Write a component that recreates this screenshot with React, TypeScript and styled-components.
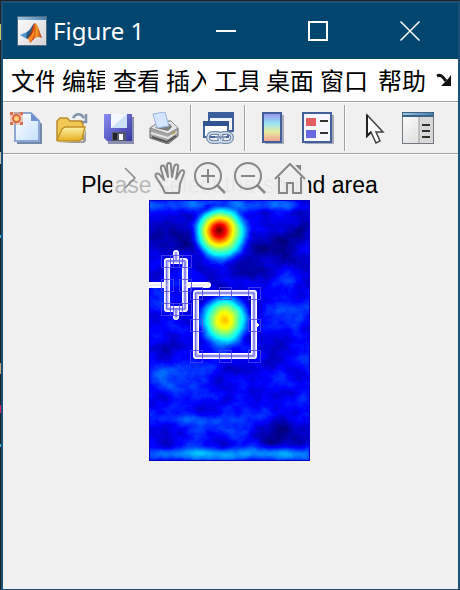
import React from "react";
import styled, { createGlobalStyle } from "styled-components";

const GlobalStyle = createGlobalStyle`
  *, *::before, *::after { box-sizing: border-box; }
  body { margin: 0; background: #222222; }
  button { appearance: none; border: 0; padding: 0; margin: 0; background: none; font: inherit; color: inherit; }
  svg { display: block; }
`;

const Desktop = styled.div`
  min-height: 100vh;
  display: flex;
  padding: 1px 0 0 1px;
  background:
    linear-gradient(#c8c4b4, #c8c4b4) 0 152px / 1px 12px no-repeat,
    linear-gradient(#c9c76a, #c9c76a) 0 24px / 1px 16px no-repeat,
    linear-gradient(#46b4cc, #46b4cc) 0 235px / 1px 3px no-repeat,
    linear-gradient(#c9a878, #c9a878) 0 363px / 1px 11px no-repeat,
    linear-gradient(#d81b60, #d81b60) 0 405px / 1px 8px no-repeat,
    linear-gradient(#46b4cc, #46b4cc) 0 444px / 1px 3px no-repeat,
    #222222;
`;

const Window = styled.section`
  flex: 1;
  min-width: 0;
  display: flex;
  flex-direction: column;
  border: 2px solid #1b5078;
  border-bottom-width: 1px;
  background: #f0f0f0;
`;

const TitleBar = styled.header`
  display: flex;
  align-items: center;
  height: 56px;
  padding: 0 2px 0 14px;
  background: #024670;
  color: #ffffff;
`;

const WindowTitle = styled.h1`
  flex: 1;
  margin: 0 0 0 6px;
  font: 400 24px/32px "Noto Sans", "Open Sans", sans-serif;
  white-space: nowrap;
`;

const CaptionButton = styled.button`
  display: grid;
  place-items: center;
  width: 92px;
  height: 54px;
`;

const MenuBar = styled.nav`
  display: flex;
  align-items: center;
  gap: 8px;
  height: 42px;
  padding-left: 8px;
  background: #ffffff;
  font: 400 24px/36px "Noto Sans CJK SC", sans-serif;
  color: #000000;
`;

const MenuItem = styled.button<{ $width: number }>`
  flex: none;
  width: ${(p) => p.$width}px;
  overflow: hidden;
  text-align: left;
  white-space: nowrap;
`;

const ToolBar = styled.div`
  display: flex;
  align-items: center;
  height: 53px;
  border-top: 1px solid #a0a0a0;
  border-bottom: 1px solid #a0a0a0;
  box-shadow: inset 0 1px #ffffff, 0 1px #ffffff;
  background: #f0f0f0;
`;

const ToolGroup = styled.div`
  display: flex;
  align-items: center;
  gap: 14px;
  height: 46px;
  padding: 0 10px 0 11px;
  border-left: 1px solid #a0a0a0;
  box-shadow: inset 1px 0 #ffffff;
  &:first-child { border-left: 0; box-shadow: none; padding-left: 7px; }
`;

const ToolButton = styled.button`
  width: 32px;
  height: 32px;
`;

const Figure = styled.main`
  flex: 1;
  display: flex;
  flex-direction: column;
  align-items: center;
  padding: 16px 2px 0 0;
`;

const PlotTitle = styled.h2`
  margin: 0;
  font: 400 23px/30px "Liberation Sans", Arial, sans-serif;
  color: #000000;
  white-space: nowrap;
`;

const Axes = styled.div`
  position: relative;
  width: 161px;
`;

const AxesTools = styled.div`
  position: absolute;
  right: 2px;
  bottom: 100%;
  display: flex;
  height: 42px;
  padding-bottom: 2px;
`;

const ToolFade = styled.div<{ $strong?: boolean }>`
  display: flex;
  align-items: center;
  gap: 8px;
  padding: 0 ${(p) => (p.$strong ? 2 : 4)}px;
  background: rgba(240, 240, 240, ${(p) => (p.$strong ? 0.97 : 0.76)});
`;

const AxesButton = styled.button`
  width: 32px;
  height: 32px;
`;

const menus = [
  { label: "文件", width: 43 },
  { label: "编辑", width: 43 },
  { label: "查看", width: 45 },
  { label: "插入", width: 40 },
  { label: "工具", width: 44 },
  { label: "桌面", width: 46 },
  { label: "窗口", width: 50 },
  { label: "帮助", width: 50 },
];

const Definitions = styled.svg`
  position: absolute;
`;

const Gradients = () => (
  <Definitions width="0" height="0" aria-hidden="true">
    <defs>
      <linearGradient id="paper" x2="1" y2="1"><stop stopColor="#ffffff" /><stop offset="1" stopColor="#c6e0fb" /></linearGradient>
      <linearGradient id="folder" x2="0" y2="1"><stop stopColor="#fff4a8" /><stop offset="1" stopColor="#e5ad20" /></linearGradient>
      <linearGradient id="disk" x2="1" y2="1"><stop stopColor="#8b8cf0" /><stop offset="1" stopColor="#3536a0" /></linearGradient>
      <linearGradient id="rainbow" x2="0" y2="1"><stop stopColor="#9c8df0" /><stop offset=".35" stopColor="#93e4f4" /><stop offset=".65" stopColor="#e9eda0" /><stop offset="1" stopColor="#f09a90" /></linearGradient>
      <linearGradient id="pane" x2="1" y2="1"><stop stopColor="#ffffff" /><stop offset="1" stopColor="#d4d4d4" /></linearGradient>
      <linearGradient id="bar" x2="1"><stop stopColor="#9fc6e4" /><stop offset="1" stopColor="#4a7fae" /></linearGradient>
      <linearGradient id="peak" x2="1"><stop stopColor="#5b1a14" /><stop offset=".45" stopColor="#d9481c" /><stop offset=".65" stopColor="#f9a028" /><stop offset="1" stopColor="#a92a12" /></linearGradient>
    </defs>
  </Definitions>
);

const AppIcon = () => (
  <svg width="30" height="30" viewBox="0 0 30 30" aria-hidden="true">
    <rect x=".5" y=".5" width="29" height="29" fill="url(#pane)" stroke="#526a80" />
    <rect x="1" y="1" width="28" height="3" fill="url(#bar)" />
    <path d="M3 19l7-3 4-3 1 5-5 5z" fill="#4f97cc" />
    <path d="M10 16c4-2 5-8 8-9l-2 10-5 6-2-2z" fill="#295c87" />
    <path d="M18 7c3 1 5 10 7 15-4-2-6-1-8 1l-4 4c0-3-1-4-3-5 5-4 5-13 8-15z" fill="url(#peak)" />
    <path d="M17 13c1 5 0 8-4 14l-2-5c3-2 5-5 6-9z" fill="#f58a24" />
  </svg>
);

const NewIcon = () => (
  <svg width="32" height="32" viewBox="0 0 32 32">
    <path d="M7 4h17l8 8v20H7z" fill="#7488ad" />
    <path d="M5 1h16l8 8v20H5z" fill="url(#paper)" stroke="#8da6d4" strokeWidth="2" />
    <path d="M21 1v8h8z" fill="#6f8fd0" />
    <g fill="#eda080"><path d="M0 0h13v13H0z" opacity=".5" /><path d="M0 0h3v3H0zM10 0h3v3h-3zM0 10h3v3H0zM10 10h3v3h-3z" fill="#d8704c" /></g>
    <circle cx="6.5" cy="6.5" r="3.5" fill="#ffd17c" stroke="#dc6840" strokeWidth="2" />
  </svg>
);

const OpenIcon = () => (
  <svg width="32" height="32" viewBox="0 0 32 32">
    <path d="M17 6c3-5 8-5 11 0M30 2v8h-8" fill="none" stroke="#8095ad" strokeWidth="2.5" />
    <path d="M3 31h25l2-2V17l-3 12z" fill="#9b9ba0" />
    <path d="M1 28V9l3-3h7l3 3h11l2 3v15z" fill="#f0ca55" stroke="#b8892c" strokeWidth="1.5" />
    <path d="M1 28l5-11 3-2h20l-3 12-3 2H2z" fill="url(#folder)" stroke="#c39126" strokeWidth="1.5" />
  </svg>
);

const SaveIcon = () => (
  <svg width="32" height="32" viewBox="0 0 32 32">
    <path d="M4 5h28v27H6z" fill="#8b8fae" />
    <path d="M2 2h28v27H5l-3-3z" fill="url(#disk)" />
    <path d="M9 2h16v14H9z" fill="#f4f9ff" /><path d="M25 2v14H9z" fill="#cbe2f7" />
    <path d="M10 20h14v9H10z" fill="#55586a" /><path d="M17 22h4v6h-4z" fill="#fff" /><path d="M11 21h4v7h-4z" fill="#22242c" />
  </svg>
);

const PrintIcon = () => (
  <svg width="32" height="32" viewBox="0 0 32 32">
    <path d="M2 16l9-6 12-1 7 7v8l-10 8-18-6z" fill="#a5a5a5" stroke="#6c6c6c" />
    <path d="M2 16l9-6 12-1 7 7-10 6z" fill="#e6e6e6" stroke="#8c8c8c" />
    <path d="M7 16l3-4h12l2 3-4 4z" fill="#7c7c7c" />
    <path d="M5 2l12-2 4 14-12 2z" fill="#d3e5ff" stroke="#9db5de" />
    <path d="M3 21l17 5 9-6" fill="none" stroke="#e4e4e4" strokeWidth="2" />
    <path d="M4 25l15 5 9-6" fill="none" stroke="#555" strokeWidth="2" />
    <path d="M24 22l3-2" stroke="#ae9f43" strokeWidth="2" />
  </svg>
);

const LinkIcon = () => (
  <svg width="32" height="32" viewBox="0 0 32 32">
    <path d="M7 1h24v18H7z" fill="#f4f6fb" stroke="#41609c" strokeWidth="2" /><path d="M6 0h26v6H6z" fill="#3b5e9f" />
    <path d="M2 10h24v15H2z" fill="#fff" stroke="#48669e" strokeWidth="2" /><path d="M1 9h26v5H1z" fill="#315390" />
    <g fill="none" stroke="#738bab" strokeWidth="4"><rect x="6" y="21" width="14" height="9" rx="4.5" /><rect x="17" y="21" width="13" height="9" rx="4.5" /></g>
    <g fill="none" stroke="#dbe6f3" strokeWidth="1.5"><rect x="6" y="21" width="14" height="9" rx="4.5" /><rect x="17" y="21" width="13" height="9" rx="4.5" /></g>
    <path d="M13 25h11" stroke="#8197b5" strokeWidth="2" />
  </svg>
);

const ColorbarIcon = () => (
  <svg width="32" height="32" viewBox="0 0 32 32">
    <path d="M9 3h19v29H9z" fill="#a6abb7" /><rect x="7" y="1" width="18" height="29" fill="url(#rainbow)" stroke="#425f9b" strokeWidth="2" />
  </svg>
);

const LegendIcon = () => (
  <svg width="32" height="32" viewBox="0 0 32 32">
    <path d="M3 3h29v29H3z" fill="#a6abb7" /><rect x="1" y="1" width="28" height="29" fill="#f5f7fd" stroke="#425f9b" strokeWidth="2" />
    <path d="M4 6h10v8H4z" fill="#e36060" /><path d="M4 18h10v8H4z" fill="#6969e4" /><path d="M18 9h8M18 21h8" stroke="#333" strokeWidth="2" />
  </svg>
);

const CursorIcon = () => (
  <svg width="32" height="32" viewBox="0 0 32 32">
    <path d="M11 3v21l4-4 5 11 4-2-4-9h7z" fill="#fff" stroke="#444" strokeWidth="1.5" />
    <path d="M11 3v21l4-4" fill="none" stroke="#222" strokeWidth="2" />
  </svg>
);

const InspectorIcon = () => (
  <svg width="32" height="32" viewBox="0 0 32 32">
    <rect x=".5" y=".5" width="31" height="31" fill="url(#pane)" stroke="#70777e" /><path d="M0 0h32v5H0z" fill="#3d6384" /><path d="M1 1h30v2H1z" fill="url(#bar)" />
    <path d="M17 5h14v26H17z" fill="#d8d8d8" /><path d="M17 5v26" stroke="#999" /><path d="M20 13h8M20 19h8M20 25h8" stroke="#303030" strokeWidth="2" />
  </svg>
);

const toolGroups = [
  [["新建", NewIcon], ["打开", OpenIcon], ["保存", SaveIcon], ["打印", PrintIcon]],
  [["链接", LinkIcon]],
  [["颜色栏", ColorbarIcon], ["图例", LegendIcon]],
  [["编辑绘图", CursorIcon], ["属性检查器", InspectorIcon]],
] as [string, React.FC][][];

const line = { fill: "none", stroke: "#878787", strokeWidth: 2 };
const Chevron = () => <svg width="32" height="32" viewBox="0 0 32 32" {...line} strokeWidth={1.5}><path d="M9 6l10 10L9 26" /></svg>;
const Hand = () => (
  <svg width="32" height="32" viewBox="0 0 32 32" {...line} strokeLinejoin="round">
    <path d="M11 31C9 25 5 20 2 15c-2-3 2-5 4-2l4 5L7 7c-1-4 3-5 4-1l3 9-1-11c0-4 4-4 4 0l1 11 2-10c1-4 5-3 4 1l-2 11 4-7c1-3 5-2 4 1l-4 11-1 9z" />
  </svg>
);
const Zoom = ({ plus }: { plus?: boolean }) => (
  <svg width="32" height="32" viewBox="0 0 32 32" {...line}>
    <circle cx="14" cy="14" r="13" /><path d={plus ? "M7 14h14M14 7v14" : "M7 14h14"} /><path d="M23 23l8 8" strokeWidth="2.5" />
  </svg>
);
const Home = () => (
  <svg width="32" height="32" viewBox="0 0 32 32" {...line}>
    <path d="M1 17L16 2l15 15M5 15v16h8V21h6v10h8V15" /><path d="M21 3h6v6z" fill="#878787" stroke="none" />
  </svg>
);

const handles = [
  [18, 61], [27, 61], [36, 61], [18, 85], [36, 85], [18, 109], [27, 109], [36, 109],
  [47, 93], [76, 93], [105, 93], [47, 125], [105, 125], [47, 156], [76, 156], [105, 156],
];
const roiPath = "M18 61H36V109H18ZM27 61V53M27 109V117M0 85H18M36 85H59M47 93H105V156H47Z";

const Heatmap = () => (
  <svg width="161" height="261" viewBox="0 0 161 261" role="img" aria-label="heat map">
    <defs>
      <filter id="jet" x="0" y="0" width="1" height="1" colorInterpolationFilters="sRGB">
        <feTurbulence type="fractalNoise" baseFrequency=".035 .045" numOctaves="5" seed="21" />
        <feColorMatrix values="1 0 0 0 0  1 0 0 0 0  1 0 0 0 0  0 0 0 0 1" result="noise" />
        <feComposite in="SourceGraphic" in2="noise" operator="arithmetic" k2="1.12" k1="-.24" k3=".24" k4="-.12" />
        <feComponentTransfer>
          <feFuncR type="table" tableValues="0 0 0 0 .5 1 1 1 .5" />
          <feFuncG type="table" tableValues="0 0 .5 1 1 1 .5 0 0" />
          <feFuncB type="table" tableValues=".5 1 1 1 .5 0 0 0 0" />
          <feFuncA type="linear" slope="0" intercept="1" />
        </feComponentTransfer>
      </filter>
      <filter id="soft" x="-1" y="-1" width="3" height="3" colorInterpolationFilters="sRGB"><feGaussianBlur stdDeviation="9" /></filter>
      <filter id="softEdge" x="-1" y="-1" width="3" height="3" colorInterpolationFilters="sRGB"><feGaussianBlur stdDeviation="3" /></filter>
      <radialGradient id="hot" gradientUnits="userSpaceOnUse" cx="72" cy="33" r="33" fx="70" fy="30">
        <stop offset=".04" stopColor="#fff" /><stop offset=".2" stopColor="#e0e0e0" /><stop offset=".31" stopColor="#bebebe" /><stop offset=".44" stopColor="#9b9b9b" /><stop offset=".65" stopColor="#606060" /><stop offset=".82" stopColor="#303030" stopOpacity=".9" /><stop offset="1" stopColor="#1c1c1c" stopOpacity="0" />
      </radialGradient>
      <radialGradient id="warm" gradientUnits="userSpaceOnUse" cx="76" cy="120" r="32">
        <stop stopColor="#b0b0b0" /><stop offset=".25" stopColor="#999999" /><stop offset=".57" stopColor="#606060" /><stop offset=".8" stopColor="#303030" stopOpacity=".9" /><stop offset="1" stopColor="#1c1c1c" stopOpacity="0" />
      </radialGradient>
    </defs>
    <g filter="url(#jet)">
      <rect width="161" height="261" fill="#1e1e1e" />
      <g filter="url(#soft)">
        <ellipse cx="20" cy="38" rx="30" ry="14" fill="#060606" />
        <ellipse cx="128" cy="44" rx="38" ry="18" fill="#080808" />
        <ellipse cx="88" cy="73" rx="38" ry="9" fill="#060606" />
        <ellipse cx="140" cy="108" rx="16" ry="16" fill="#363636" />
        <ellipse cx="28" cy="180" rx="35" ry="16" fill="#303030" />
        <ellipse cx="55" cy="222" rx="70" ry="7" fill="#303030" />
        <ellipse cx="135" cy="238" rx="35" ry="9" fill="#060606" />
      </g>
      <g filter="url(#softEdge)" fill="#3c3c3c">
        <ellipse cx="70" cy="5" rx="90" ry="5" />
        <ellipse cx="60" cy="220" rx="34" ry="3" />
        <ellipse cx="80" cy="254" rx="84" ry="5" fill="#4c4c4c" />
      </g>
      <circle cx="72" cy="33" r="33" fill="url(#hot)" />
      <circle cx="76" cy="120" r="32" fill="url(#warm)" />
    </g>
    <rect x=".5" y=".5" width="160" height="260" fill="none" stroke="#0000c8" />
    <g fill="none" strokeLinejoin="round" strokeLinecap="round">
      <path d={roiPath} stroke="#fff" strokeWidth="6" />
      <path d="M107 122l3 3-3 3z" fill="#fff" stroke="#fff" />
      <path d="M18 61H36V109H18ZM47 93H105V156H47ZM27 53V61M27 109V117" stroke="#b5b3fa" strokeWidth="3" />
      <path d="M18 61H36V109H18ZM47 93H105V156H47ZM27 53V61M27 109V117" stroke="#6864ee" strokeWidth="1" />
      <path d="M0 85H18M36 85H59" stroke="#dcdbfc" strokeWidth="1" />
    </g>
    <g fill="none" stroke="#4b45ee" strokeOpacity=".8">
      {handles.map(([x, y]) => <rect key={`${x}-${y}`} x={x - 5.5} y={y - 5.5} width="12" height="12" />)}
    </g>
  </svg>
);

export default function App() {
  return (
    <Desktop>
      <GlobalStyle />
      <Gradients />
      <Window>
        <TitleBar>
          <AppIcon />
          <WindowTitle>Figure 1</WindowTitle>
          <CaptionButton aria-label="最小化"><svg width="20" height="20"><path d="M0 10h20" stroke="#fff" strokeWidth="2" /></svg></CaptionButton>
          <CaptionButton aria-label="最大化"><svg width="20" height="20"><rect x="1" y="1" width="18" height="18" fill="none" stroke="#fff" strokeWidth="2" /></svg></CaptionButton>
          <CaptionButton aria-label="关闭"><svg width="20" height="20"><path d="M.5.5l19 19M19.5.5l-19 19" stroke="#fff" strokeWidth="1.5" /></svg></CaptionButton>
        </TitleBar>
        <MenuBar>
          {menus.map((m) => <MenuItem key={m.label} $width={m.width}>{m.label}</MenuItem>)}
          <button aria-label="停靠图窗">
            <svg width="16" height="14" viewBox="0 0 16 14"><path d="M1 3c4-2 6 1 9 5" fill="none" stroke="#111" strokeWidth="3" /><path d="M15 2v11H5l4-4 3-3z" fill="#111" /></svg>
          </button>
        </MenuBar>
        <ToolBar role="toolbar">
          {toolGroups.map((group, i) => (
            <ToolGroup key={i}>
              {group.map(([label, Icon]) => <ToolButton key={label} aria-label={label}><Icon /></ToolButton>)}
            </ToolGroup>
          ))}
        </ToolBar>
        <Figure>
          <PlotTitle>Please select the sound area</PlotTitle>
          <Axes>
            <Heatmap />
            <AxesTools>
              <ToolFade><AxesButton aria-label="展开"><Chevron /></AxesButton></ToolFade>
              <ToolFade $strong>
                <AxesButton aria-label="平移"><Hand /></AxesButton>
                <AxesButton aria-label="放大"><Zoom plus /></AxesButton>
                <AxesButton aria-label="缩小"><Zoom /></AxesButton>
                <AxesButton aria-label="还原视图"><Home /></AxesButton>
              </ToolFade>
            </AxesTools>
          </Axes>
        </Figure>
      </Window>
    </Desktop>
  );
}
